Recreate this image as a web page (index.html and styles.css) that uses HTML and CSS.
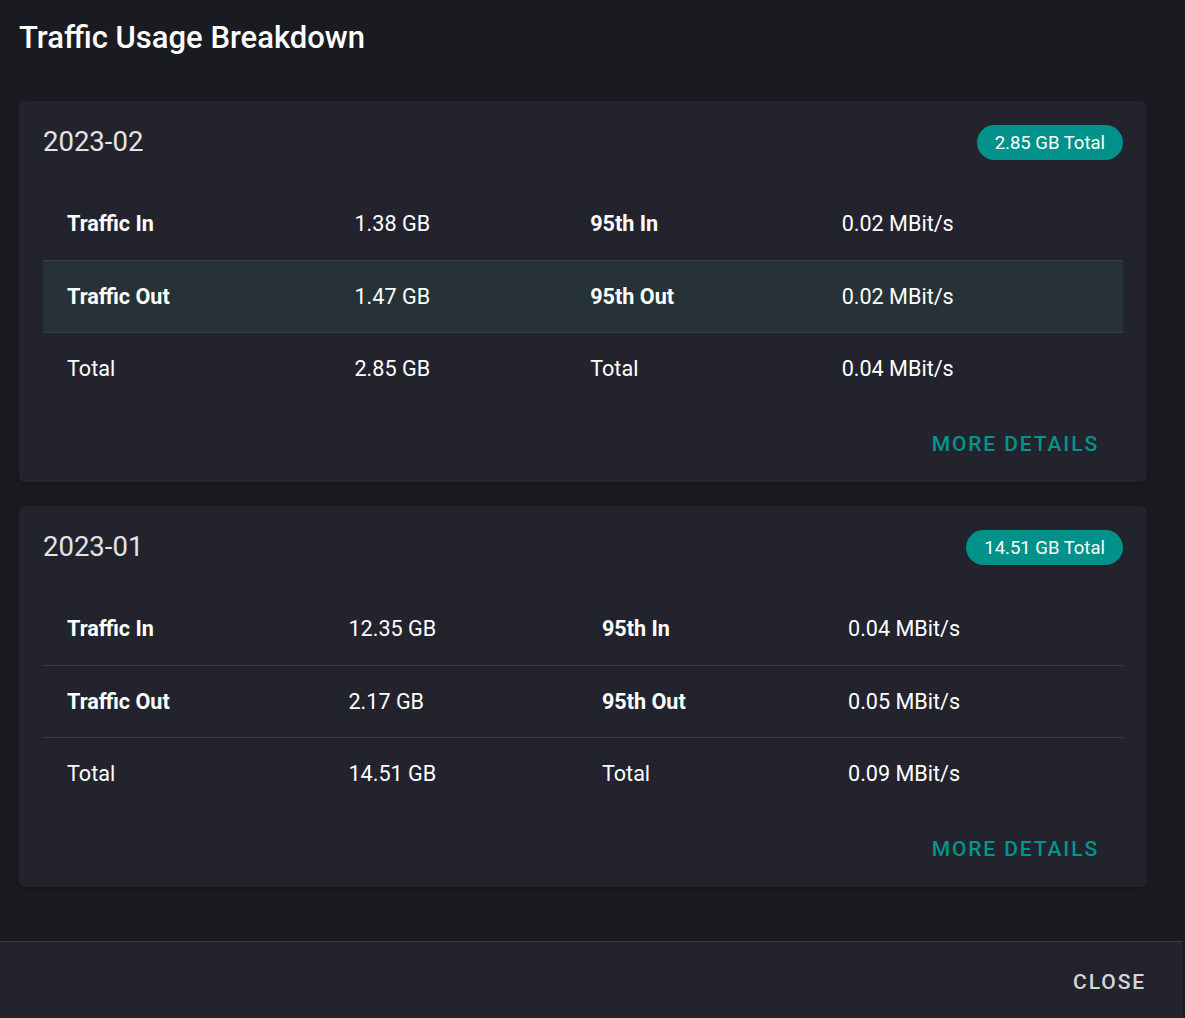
FILE: index.html
```html
<!DOCTYPE html>
<html lang="en">
<head>
<meta charset="utf-8">
<title>Traffic Usage Breakdown</title>
<link rel="stylesheet" href="styles.css">
</head>
<body>
<div class="dialog">
  <div class="dialog-title">Traffic Usage Breakdown</div>
  <div class="dialog-content">
    <div class="card">
      <div class="card-head">
        <span class="card-year">2023-02</span>
        <span class="chip">2.85 GB Total</span>
      </div>
      <table class="usage">
        <tbody>
          <tr><th>Traffic In</th><td>1.38 GB</td><th>95th In</th><td>0.02 MBit/s</td></tr>
          <tr class="hover"><th>Traffic Out</th><td>1.47 GB</td><th>95th Out</th><td>0.02 MBit/s</td></tr>
          <tr><td>Total</td><td>2.85 GB</td><td>Total</td><td>0.04 MBit/s</td></tr>
        </tbody>
      </table>
      <div class="card-actions"><button class="btn-text">More Details</button></div>
    </div>
    <div class="card">
      <div class="card-head">
        <span class="card-year">2023-01</span>
        <span class="chip">14.51 GB Total</span>
      </div>
      <table class="usage">
        <tbody>
          <tr><th>Traffic In</th><td>12.35 GB</td><th>95th In</th><td>0.04 MBit/s</td></tr>
          <tr><th>Traffic Out</th><td>2.17 GB</td><th>95th Out</th><td>0.05 MBit/s</td></tr>
          <tr><td>Total</td><td>14.51 GB</td><td>Total</td><td>0.09 MBit/s</td></tr>
        </tbody>
      </table>
      <div class="card-actions"><button class="btn-text">More Details</button></div>
    </div>
  </div>
  <div class="dialog-actions"><button class="btn-close">Close</button></div>
</div>
</body>
</html>
```
FILE: styles.css
```css
* { box-sizing: border-box; }
html, body { margin: 0; padding: 0; height: 100%; }
body {
  background: #1b1c21;
  font-family: Roboto, "Noto Sans", "Liberation Sans", sans-serif;
  color: #ffffff;
}
.dialog {
  width: calc(100% - 2px);
  height: 100vh;
  background: #1a1b20;
  display: flex;
  flex-direction: column;
}
.dialog-title {
  padding: 20px 19px 45px;
  font-size: 31px;
  line-height: 36px;
  font-weight: 500;
  color: #ffffff;
}
.dialog-content {
  flex: 1;
  padding: 0 36px 54px 19px;
  display: flex;
  flex-direction: column;
  gap: 24px;
  overflow: hidden;
}
.card {
  background: #23232d;
  border-radius: 6px;
  padding: 24px 24px 12px;
  box-shadow: 0 2px 4px rgba(0,0,0,0.25);
}
.card-head {
  display: flex;
  align-items: center;
  justify-content: space-between;
  height: 35px;
  margin-bottom: 28px;
}
.card-year {
  font-size: 27.5px;
  font-weight: 400;
  color: #e4e4e6;
  margin-top: -2px;
}
.chip {
  height: 35px;
  display: inline-flex;
  align-items: center;
  padding: 0 18px;
  border-radius: 18px;
  background: #00918a;
  color: #ffffff;
  font-size: 18.5px;
}
.usage {
  width: 100%;
  border-collapse: collapse;
  font-size: 21.6px;
}
.usage th, .usage td {
  height: 72px;
  padding: 0 24px;
  text-align: left;
  vertical-align: middle;
  white-space: nowrap;
}
.usage th { font-weight: 700; }
.usage td { font-weight: 400; }
.usage tr + tr { border-top: 1px solid #3b3d45; }
.usage tr.hover { background: #263238; }
.card-actions {
  display: flex;
  justify-content: flex-end;
  padding-top: 12px;
}
.btn-text {
  background: none;
  border: none;
  height: 54px;
  padding: 2px 24px 0;
  font-family: inherit;
  font-size: 21px;
  font-weight: 500;
  letter-spacing: 0.09em;
  text-transform: uppercase;
  color: #00958c;
  cursor: pointer;
}
.dialog-actions {
  background: #23232d;
  border-top: 1px solid #3a3b44;
  height: 77px;
  display: flex;
  align-items: center;
  justify-content: flex-end;
  padding: 0 37px 0 0;
}
.btn-close {
  background: none;
  border: none;
  padding: 0;
  font-family: inherit;
  font-size: 21px;
  font-weight: 500;
  letter-spacing: 0.09em;
  text-transform: uppercase;
  color: #d4d6db;
  margin-top: 4px;
}
```
